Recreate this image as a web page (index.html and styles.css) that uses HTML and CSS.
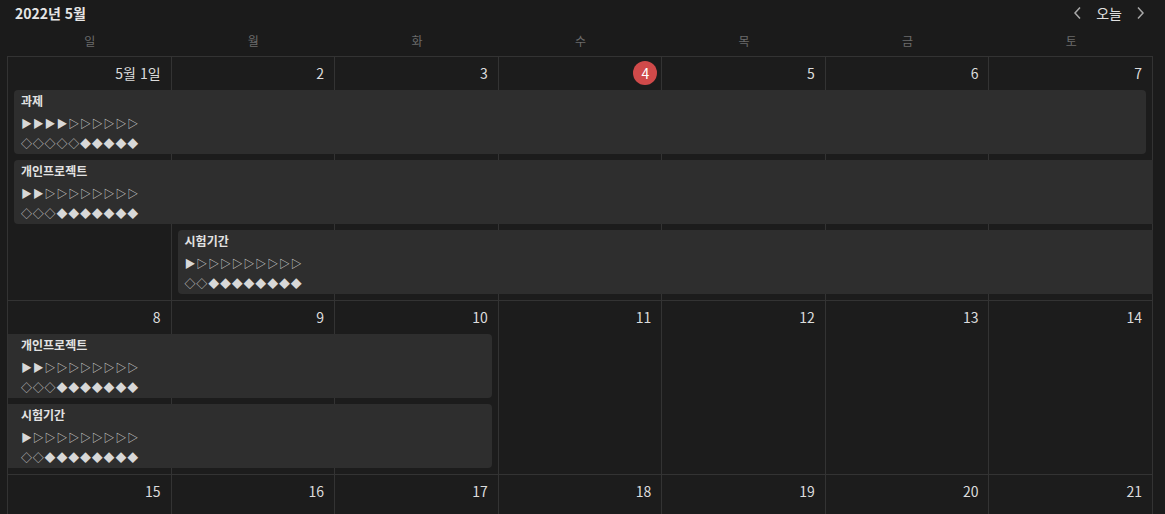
FILE: index.html
```html
<!DOCTYPE html>
<html lang="ko">
<head>
  <meta charset="UTF-8">
  <title>2022년 5월</title>
  <link rel="stylesheet" href="styles.css">
</head>
<body>
  <div class="calendar-wrap">
    <header class="cal-header">
      <h1 class="cal-title">2022년 5월</h1>
      <div class="cal-nav">
        <button class="nav-btn" aria-label="이전">
          <svg width="10" height="14" viewBox="0 0 10 14"><path d="M7 1.5 L2 7 L7 12.5" fill="none" stroke="#a8a8a8" stroke-width="1.5"/></svg>
        </button>
        <button class="today-btn">오늘</button>
        <button class="nav-btn" aria-label="다음">
          <svg width="10" height="14" viewBox="0 0 10 14"><path d="M3 1.5 L8 7 L3 12.5" fill="none" stroke="#a8a8a8" stroke-width="1.5"/></svg>
        </button>
      </div>
    </header>

    <div class="weekdays">
      <div>일</div><div>월</div><div>화</div><div>수</div><div>목</div><div>금</div><div>토</div>
    </div>

    <div class="calendar">
      <!-- week 1 -->
      <div class="week rows-3">
        <div class="day c1"><span class="date">5월 1일</span></div>
        <div class="day c2"><span class="date">2</span></div>
        <div class="day c3"><span class="date">3</span></div>
        <div class="day c4"><span class="date today">4</span></div>
        <div class="day c5"><span class="date">5</span></div>
        <div class="day c6"><span class="date">6</span></div>
        <div class="day c7"><span class="date">7</span></div>

        <div class="event r2 span-1-8 starts ends">
          <div class="event-title">과제</div>
          <div class="event-line">▶▶▶▶▷▷▷▷▷▷</div>
          <div class="event-line">◇◇◇◇◇◆◆◆◆◆</div>
        </div>
        <div class="event r3 span-1-8 starts">
          <div class="event-title">개인프로젝트</div>
          <div class="event-line">▶▶▷▷▷▷▷▷▷▷</div>
          <div class="event-line">◇◇◇◆◆◆◆◆◆◆</div>
        </div>
        <div class="event r4 span-2-8 starts">
          <div class="event-title">시험기간</div>
          <div class="event-line">▶▷▷▷▷▷▷▷▷▷</div>
          <div class="event-line">◇◇◆◆◆◆◆◆◆◆</div>
        </div>
      </div>

      <!-- week 2 -->
      <div class="week rows-2">
        <div class="day c1"><span class="date">8</span></div>
        <div class="day c2"><span class="date">9</span></div>
        <div class="day c3"><span class="date">10</span></div>
        <div class="day c4"><span class="date">11</span></div>
        <div class="day c5"><span class="date">12</span></div>
        <div class="day c6"><span class="date">13</span></div>
        <div class="day c7"><span class="date">14</span></div>

        <div class="event r2 span-1-4 ends">
          <div class="event-title">개인프로젝트</div>
          <div class="event-line">▶▶▷▷▷▷▷▷▷▷</div>
          <div class="event-line">◇◇◇◆◆◆◆◆◆◆</div>
        </div>
        <div class="event r3 span-1-4 ends">
          <div class="event-title">시험기간</div>
          <div class="event-line">▶▷▷▷▷▷▷▷▷▷</div>
          <div class="event-line">◇◇◆◆◆◆◆◆◆◆</div>
        </div>
      </div>

      <!-- week 3 -->
      <div class="week rows-0">
        <div class="day c1"><span class="date">15</span></div>
        <div class="day c2"><span class="date">16</span></div>
        <div class="day c3"><span class="date">17</span></div>
        <div class="day c4"><span class="date">18</span></div>
        <div class="day c5"><span class="date">19</span></div>
        <div class="day c6"><span class="date">20</span></div>
        <div class="day c7"><span class="date">21</span></div>
      </div>
    </div>
  </div>
</body>
</html>
```

FILE: styles.css
```css
body {
  margin: 0;
  padding: 0;
  background-color: #1b1b1b;
  color: #dcdcdc;
  font-family: "Noto Sans CJK KR", "Noto Sans", sans-serif;
  overflow: hidden;
}
.calendar-wrap {
  padding: 0 12px 0 7px;
}
.cal-header {
  display: flex;
  justify-content: space-between;
  align-items: center;
  height: 25px;
  padding: 0 6px 0 8px;
}
.cal-title {
  margin: 0;
  font-size: 14px;
  font-weight: bold;
  color: #e6e6e6;
}
.cal-nav {
  display: flex;
  align-items: center;
  gap: 5px;
}
.nav-btn, .today-btn {
  background: none;
  border: none;
  padding: 0;
  color: #e0e0e0;
  font-family: inherit;
  cursor: pointer;
}
.nav-btn {
  display: flex;
  width: 14px;
  justify-content: center;
}
.today-btn {
  font-size: 14px;
  padding: 0 6px;
}
.weekdays {
  display: grid;
  grid-template-columns: repeat(7, 1fr);
  height: 31px;
  line-height: 31px;
  padding-left: 1px;
  text-align: center;
  font-size: 12px;
  color: #6b6b6b;
}
.calendar {
  border-top: 1px solid #333;
  border-left: 1px solid #333;
}
.week {
  display: grid;
  grid-template-columns: repeat(7, 1fr);
}
.rows-3 { grid-template-rows: 33px 70px 70px 71px; }
.rows-2 { grid-template-rows: 33px 70px 71px; }
.rows-0 { grid-template-rows: 33px 60px; }
.day {
  grid-row: 1 / -1;
  border-right: 1px solid #333;
  border-bottom: 1px solid #333;
  background-color: #1c1c1c;
  text-align: right;
  padding: 3px 10px 0 0;
}
.c1 { grid-column: 1; }
.c2 { grid-column: 2; }
.c3 { grid-column: 3; }
.c4 { grid-column: 4; }
.c5 { grid-column: 5; }
.c6 { grid-column: 6; }
.c7 { grid-column: 7; }
.date {
  display: inline-block;
  font-size: 14px;
  line-height: 20px;
  color: #dcdcdc;
}
.today {
  width: 24px;
  height: 24px;
  line-height: 24px;
  margin: 1px -6px 0 0;
  border-radius: 50%;
  background-color: #d04a4a;
  color: #fff;
  text-align: center;
}
.event {
  height: 64px;
  box-sizing: border-box;
  padding: 1px 7px 0 13px;
  background-color: #2e2e2e;
  font-size: 12px;
  overflow: hidden;
}
.r2 { grid-row: 2; }
.r3 { grid-row: 3; }
.r4 { grid-row: 4; }
.span-1-8 { grid-column: 1 / 8; }
.span-2-8 { grid-column: 2 / 8; }
.span-1-4 { grid-column: 1 / 4; }
.starts {
  margin-left: 6px;
  padding-left: 7px;
  border-top-left-radius: 4px;
  border-bottom-left-radius: 4px;
}
.ends {
  margin-right: 7px;
  border-top-right-radius: 4px;
  border-bottom-right-radius: 4px;
}
.event-title {
  line-height: 20px;
  margin-bottom: 2px;
  font-weight: bold;
  color: #e2e2e2;
}
.event-line {
  line-height: 20px;
  font-size: 11px;
  letter-spacing: 0.8px;
  color: #d8d8d8;
  white-space: nowrap;
}
```
